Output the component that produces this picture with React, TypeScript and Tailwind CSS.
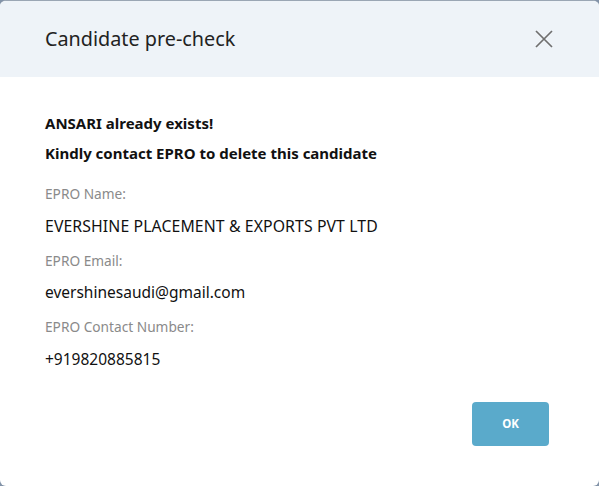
import React from "react";

export default function App() {
  return (
    <div className="w-[599px] h-[486px] bg-[#8293a8]" style={{ fontFamily: '"Noto Sans", "Open Sans", sans-serif' }}>
      <div className="w-[599px] h-[486px] bg-white rounded-[6px] overflow-hidden flex flex-col border-t border-[#9aa6b4]">
        <div className="h-[76px] bg-[#eef3f8] flex items-center justify-between pl-[45px] pr-[45px]">
          <h1 className="text-[19.8px] text-[#222] font-normal">Candidate pre-check</h1>
          <svg width="18" height="18" viewBox="0 0 18 18" className="mr-[1px]">
            <path d="M1 1 L17 17 M17 1 L1 17" stroke="#6f6f6f" strokeWidth="1.7" fill="none" />
          </svg>
        </div>
        <div className="flex flex-col pl-[45px] pt-[36px] text-[#111]">
          <p className="text-[15px] font-bold leading-[20px]">ANSARI already exists!</p>
          <p className="text-[15px] font-bold leading-[20px] mt-[10px]">Kindly contact EPRO to delete this candidate</p>
          <p className="text-[13.7px] text-[#8a8a8a] leading-[18px] mt-[22px]">EPRO Name:</p>
          <p className="text-[15.8px] tracking-[0.1px] leading-[20px] mt-[13px]">EVERSHINE PLACEMENT &amp; EXPORTS PVT LTD</p>
          <p className="text-[13.7px] text-[#8a8a8a] leading-[18px] mt-[16px]">EPRO Email:</p>
          <p className="text-[15.5px] leading-[20px] mt-[12px]">evershinesaudi@gmail.com</p>
          <p className="text-[13.7px] text-[#8a8a8a] leading-[18px] mt-[16px]">EPRO Contact Number:</p>
          <p className="text-[15.5px] leading-[20px] mt-[13px]">+919820885815</p>
        </div>
        <div className="flex justify-end pr-[50px] mt-[33px]">
          <button className="w-[77px] h-[44px] rounded-[4px] bg-[#5aaacb] text-white text-[11.5px] font-bold">OK</button>
        </div>
      </div>
    </div>
  );
}
